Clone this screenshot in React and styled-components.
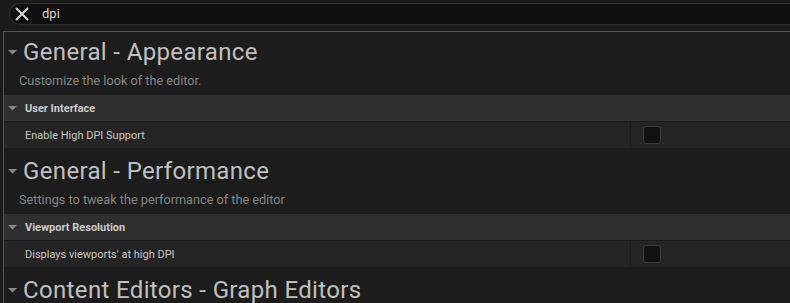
import React from 'react'
import styled, { createGlobalStyle } from 'styled-components';

const GlobalStyle = createGlobalStyle`
    html, body {
        margin : 0;
        padding : 0;
        background : #1a1a1a;
        font-family : Roboto, "Noto Sans", sans-serif;
        overflow : hidden;
    }
`
const Page = styled.div`
    width : 790px;
    height : 303px;
    overflow : hidden;
    background : #1a1a1a;
    padding-top : 3px;
    box-sizing : border-box;
`
const SearchBox = styled.div`
    margin-left : 9px;
    height : 22px;
    box-sizing : border-box;
    background : #0f0f0f;
    border : 1px solid #2e2e2e;
    border-right : none;
    border-radius : 11px 0 0 11px;
    display : flex;
    align-items : center;
    padding-left : 5px;
    gap : 13px;
`
const SearchText = styled.span`
    color : #d4d4d4;
    font-size : 13px;
    line-height : 20px;
`
const Panel = styled.div`
    margin : 6px 0 0 3px;
    border-left : 1px solid #1763a6;
    border-top : 1px solid #1763a6;
    background : #1c1c1c;
    height : 300px;
`
const Section = styled.div`
    margin-top : ${p => p.first ? 0 : 3}px;
`
const Header = styled.div`
    padding : 6px 0 6px;
`
const TitleRow = styled.div`
    display : flex;
    align-items : center;
    height : 28px;
    padding-left : 4px;
    gap : 6px;
`
const Title = styled.span`
    color : #c0c0c0;
    font-size : 24px;
    letter-spacing : 0.35px;
    line-height : 28px;
    white-space : nowrap;
`
const Desc = styled.div`
    margin-top : 7px;
    padding-left : 15px;
    color : #858585;
    font-size : 12.7px;
    line-height : 16px;
`
const Category = styled.div`
    height : 26px;
    background : #2f2f2f;
    border-bottom : 1px solid #1a1a1a;
    display : flex;
    align-items : center;
    padding-left : 4px;
    gap : 8px;
    color : #cbcbcb;
    font-size : 11px;
    font-weight : 700;
`
const Row = styled.div`
    height : 26px;
    background : #242424;
    display : grid;
    grid-template-columns : 627px 1fr;
`
const Name = styled.div`
    display : flex;
    align-items : center;
    padding-left : 21px;
    color : #c6c6c6;
    font-size : 11px;
    border-right : 1px solid #1b1b1b;
`
const Value = styled.div`
    display : flex;
    align-items : center;
    padding-left : 12px;
`
const Check = styled.div`
    width : 18px;
    height : 18px;
    box-sizing : border-box;
    background : #111111;
    border : 1px solid #3b3b3b;
    border-radius : 3px;
`

const Arrow = ({ size = 9 }) => (
    <svg width={size} height="5" viewBox="0 0 9 5">
        <path d="M0 0 H9 L4.5 4.5 Z" fill="#878787" />
    </svg>
)

const CloseIcon = () => (
    <svg width="14" height="14" viewBox="0 0 14 14">
        <path d="M1.5 1.5 L12.5 12.5 M12.5 1.5 L1.5 12.5" stroke="#d6d6d6" strokeWidth="2" strokeLinecap="round" />
    </svg>
)

const sections = [
    {
        title : "General - Appearance",
        desc : "Customize the look of the editor.",
        category : "User Interface",
        prop : "Enable High DPI Support",
    },
    {
        title : "General - Performance",
        desc : "Settings to tweak the performance of the editor",
        category : "Viewport Resolution",
        prop : "Displays viewports' at high DPI",
    },
    {
        title : "Content Editors - Graph Editors",
    },
]

export default function App() {
  return (
    <Page>
        <GlobalStyle />
        <SearchBox>
            <CloseIcon />
            <SearchText>dpi</SearchText>
        </SearchBox>
        <Panel>
            {sections.map((s, i) => (
                <Section key={s.title} first={i === 0}>
                    <Header>
                        <TitleRow>
                            <Arrow />
                            <Title>{s.title}</Title>
                        </TitleRow>
                        {s.desc && <Desc>{s.desc}</Desc>}
                    </Header>
                    {s.category && (
                        <>
                            <Category>
                                <Arrow />
                                <span>{s.category}</span>
                            </Category>
                            <Row>
                                <Name>{s.prop}</Name>
                                <Value><Check /></Value>
                            </Row>
                        </>
                    )}
                </Section>
            ))}
        </Panel>
    </Page>
  )
}
